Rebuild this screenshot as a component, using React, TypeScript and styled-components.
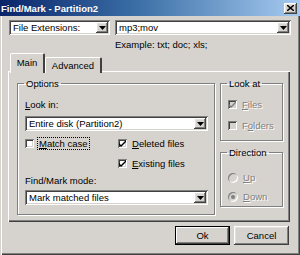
import styled, { createGlobalStyle } from "styled-components";

const GlobalStyle = createGlobalStyle`
  html, body {
    margin: 0;
    padding: 0;
    background: #d6d3ce;
  }
  body {
    font-family: "Liberation Sans", Arial, sans-serif;
    font-size: 9.5px;
    color: #000;
  }
`;

const raised = `
  box-shadow: inset -1px -1px #404040, inset 1px 1px #ffffff,
    inset -2px -2px #808080, inset 2px 2px #e4e1dc;
`;

const sunken = `
  box-shadow: inset 1px 1px #808080, inset -1px -1px #ffffff,
    inset 2px 2px #404040, inset -2px -2px #d6d3ce;
`;

const Window = styled.div`
  width: 300px;
  height: 255px;
  display: flex;
  flex-direction: column;
  background: #d6d3ce;
  overflow: hidden;
`;

const TitleBar = styled.div`
  height: 16px;
  flex: none;
  display: flex;
  align-items: center;
  justify-content: space-between;
  padding: 0 3px 0 1px;
  background: linear-gradient(to right, #0a246a 0%, #3a6ea5 45%, #a6caf0 100%);
  color: #fff;
  font-weight: bold;
  font-size: 9.5px;
`;

const CloseButton = styled.div`
  width: 13px;
  height: 11px;
  display: flex;
  align-items: center;
  justify-content: center;
  background: #d6d3ce;
  ${raised}
`;

const Frame = styled.div`
  flex: 1;
  display: flex;
  flex-direction: column;
  box-shadow: inset 1px 0 #d6d3ce, inset 2px 0 #ffffff, inset -1px -1px #404040,
    inset -2px -2px #808080;
`;

const TopRow = styled.div`
  display: flex;
  gap: 5px;
  padding: 4px 0 0 9px;
`;

const Field = styled.div<{ $width: number }>`
  width: ${(p) => p.$width}px;
  height: 15px;
  box-sizing: border-box;
  display: flex;
  align-items: center;
  justify-content: space-between;
  padding: 2px 2px 2px 4px;
  background: #fff;
  ${sunken}
  line-height: 11px;
  white-space: nowrap;
`;

const ArrowButton = styled.div`
  width: 12px;
  height: 11px;
  flex: none;
  display: flex;
  align-items: center;
  justify-content: center;
  background: #d6d3ce;
  ${raised}
`;

const Hint = styled.div`
  margin-top: 4px;
  padding-left: 115px;
  line-height: 11px;
`;

const TabStrip = styled.div`
  display: flex;
  align-items: flex-end;
  padding-left: 10px;
  margin-top: 3px;
  margin-bottom: -2px;
  position: relative;
  z-index: 1;
`;

const Tab = styled.div<{ $active?: boolean; $width: number }>`
  width: ${(p) => p.$width}px;
  height: ${(p) => (p.$active ? 20 : 16)}px;
  box-sizing: border-box;
  display: flex;
  align-items: center;
  justify-content: center;
  padding-bottom: ${(p) => (p.$active ? 2 : 0)}px;
  background: #d6d3ce;
  border-top: 1px solid #ffffff;
  border-left: 1px solid #ffffff;
  border-right: 2px solid #404040;
  border-top-left-radius: 2px;
  border-top-right-radius: 2px;
`;

const Panel = styled.div`
  margin-left: 8px;
  width: 282px;
  height: 151px;
  box-sizing: border-box;
  display: flex;
  gap: 5px;
  padding: 7px 7px 0 9px;
  box-shadow: inset 1px 1px #ffffff, inset -1px -1px #404040, inset -2px -2px #808080;
`;

const Group = styled.fieldset<{ $width: number; $height: number }>`
  margin: 0;
  width: ${(p) => p.$width}px;
  height: ${(p) => p.$height}px;
  box-sizing: border-box;
  border: 1px solid #808080;
  box-shadow: inset 1px 1px #ffffff, 1px 1px #ffffff;
  padding: 0 6px 0 7px;
  display: flex;
  flex-direction: column;
`;

const Legend = styled.legend`
  padding: 0 2px;
  margin-left: -1px;
  line-height: 11px;
`;

const Label = styled.div<{ $top: number }>`
  margin-top: ${(p) => p.$top}px;
  line-height: 11px;
`;

const Spaced = styled.div<{ $top: number }>`
  margin-top: ${(p) => p.$top}px;
`;

const CheckGrid = styled.div`
  display: grid;
  grid-template-columns: 93px 1fr;
  row-gap: 7px;
  margin-top: 6px;
`;

const Option = styled.div<{ $disabled?: boolean }>`
  display: flex;
  align-items: center;
  gap: 4px;
  height: 13px;
  color: ${(p) => (p.$disabled ? "#808080" : "#000")};
  text-shadow: ${(p) => (p.$disabled ? "1px 1px #ffffff" : "none")};
`;

const OptionText = styled.span<{ $focus?: boolean }>`
  line-height: 11px;
  padding: 0 1px;
  outline: ${(p) => (p.$focus ? "1px dotted #000" : "none")};
`;

const Box = styled.div<{ $disabled?: boolean }>`
  width: 9px;
  height: 9px;
  flex: none;
  display: flex;
  align-items: center;
  justify-content: center;
  background: ${(p) => (p.$disabled ? "#d6d3ce" : "#fff")};
  ${sunken}
`;

const Radio = styled.div`
  width: 10px;
  height: 10px;
  flex: none;
  border-radius: 50%;
  display: flex;
  align-items: center;
  justify-content: center;
  background: #d6d3ce;
  box-shadow: inset 1px 1px #808080, inset -1px -1px #ffffff;
`;

const Dot = styled.div`
  width: 4px;
  height: 4px;
  border-radius: 50%;
  background: #808080;
`;

const RightColumn = styled.div`
  display: flex;
  flex-direction: column;
  gap: 6px;
`;

const Stack = styled.div<{ $gap: number; $top: number }>`
  display: flex;
  flex-direction: column;
  gap: ${(p) => p.$gap}px;
  margin-top: ${(p) => p.$top}px;
`;

const Buttons = styled.div`
  display: flex;
  justify-content: flex-end;
  gap: 4px;
  padding: 4px 11px 0 0;
`;

const Button = styled.div<{ $default?: boolean }>`
  width: 55px;
  height: 19px;
  box-sizing: border-box;
  display: flex;
  align-items: center;
  justify-content: center;
  background: #d6d3ce;
  ${(p) =>
    p.$default
      ? `box-shadow: inset 0 0 0 1px #000, inset -2px -2px #404040, inset 2px 2px #ffffff, inset -3px -3px #808080;`
      : raised}
`;

const Arrow = () => (
  <svg width="7" height="4" viewBox="0 0 7 4">
    <path d="M0 0h7L3.5 4z" fill="#000" />
  </svg>
);

const Check = ({ gray }: { gray?: boolean }) => (
  <svg width="7" height="7" viewBox="0 0 7 7">
    <path d="M0 3l2 2 5-5v2L2 7 0 5z" fill={gray ? "#808080" : "#000"} />
  </svg>
);

const Select = ({ width, text }: { width: number; text: string }) => (
  <Field $width={width}>
    <span>{text}</span>
    <ArrowButton>
      <Arrow />
    </ArrowButton>
  </Field>
);

const U = styled.span`
  text-decoration: underline;
`;

export default function App() {
  return (
    <Window>
      <GlobalStyle />
      <TitleBar>
        <span>Find/Mark - Partition2</span>
        <CloseButton>
          <svg width="7" height="6" viewBox="0 0 7 6">
            <path d="M0 0l7 6M7 0L0 6" stroke="#000" strokeWidth="1.4" />
          </svg>
        </CloseButton>
      </TitleBar>
      <Frame>
        <TopRow>
          <Select width={101} text="File Extensions:" />
          <Select width={176} text="mp3;mov" />
        </TopRow>
        <Hint>Example: txt; doc; xls;</Hint>
        <TabStrip>
          <Tab $active $width={35}>Main</Tab>
          <Tab $width={57}>Advanced</Tab>
        </TabStrip>
        <Panel>
          <Group $width={199} $height={137}>
            <Legend>Options</Legend>
            <Label $top={10}>
              <U>L</U>ook in:
            </Label>
            <Spaced $top={6}>
              <Select width={183} text="Entire disk (Partition2)" />
            </Spaced>
            <CheckGrid>
              <Option>
                <Box />
                <OptionText $focus>
                  <U>M</U>atch case
                </OptionText>
              </Option>
              <Option>
                <Box>
                  <Check />
                </Box>
                <OptionText>
                  <U>D</U>eleted files
                </OptionText>
              </Option>
              <span />
              <Option>
                <Box>
                  <Check />
                </Box>
                <OptionText>
                  <U>E</U>xisting files
                </OptionText>
              </Option>
            </CheckGrid>
            <Label $top={5}>Find/Mark mode:</Label>
            <Spaced $top={4}>
              <Select width={183} text="Mark matched files" />
            </Spaced>
          </Group>
          <RightColumn>
            <Group $width={63} $height={63}>
              <Legend>Look at</Legend>
              <Stack $gap={8} $top={9}>
                <Option $disabled>
                  <Box $disabled>
                    <Check gray />
                  </Box>
                  <OptionText>
                    <U>F</U>iles
                  </OptionText>
                </Option>
                <Option $disabled>
                  <Box $disabled />
                  <OptionText>
                    F<U>o</U>lders
                  </OptionText>
                </Option>
              </Stack>
            </Group>
            <Group $width={63} $height={60}>
              <Legend>Direction</Legend>
              <Stack $gap={6} $top={13}>
                <Option $disabled>
                  <Radio />
                  <OptionText>
                    <U>U</U>p
                  </OptionText>
                </Option>
                <Option $disabled>
                  <Radio>
                    <Dot />
                  </Radio>
                  <OptionText>
                    <U>D</U>own
                  </OptionText>
                </Option>
              </Stack>
            </Group>
          </RightColumn>
        </Panel>
        <Buttons>
          <Button $default>Ok</Button>
          <Button>Cancel</Button>
        </Buttons>
      </Frame>
    </Window>
  );
}
